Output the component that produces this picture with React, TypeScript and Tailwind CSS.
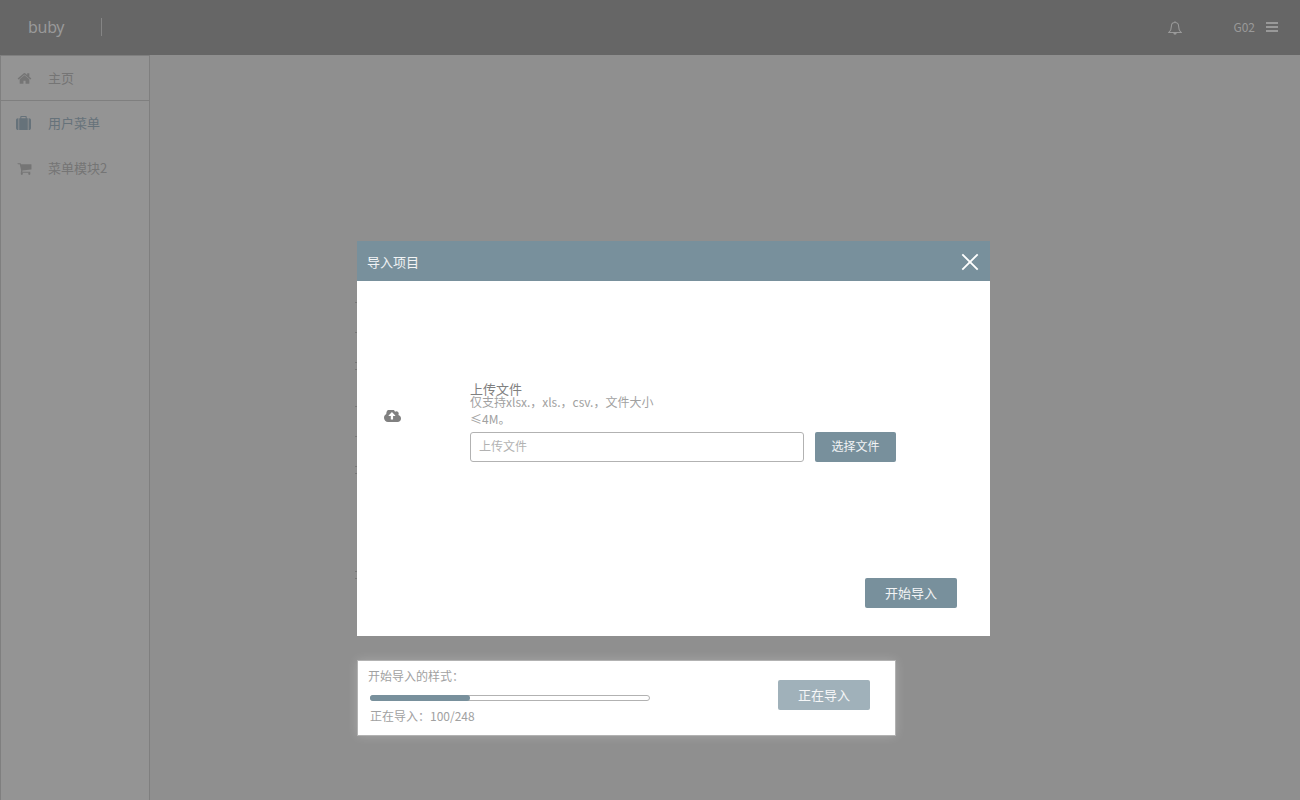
import React from "react";

type IconProps = { className?: string };

const HomeIcon = ({ className }: IconProps) => (
  <svg viewBox="0 0 1792 1792" fill="currentColor" className={className}>
    <path d="M1472 992v480q0 26-19 45t-45 19h-384v-384h-256v384h-384q-26 0-45-19t-19-45v-480q0-1 .5-3t.5-3l575-474 575 474q1 2 1 6zm223-69l-62 74q-8 9-21 11h-3q-13 0-21-7l-692-577-692 577q-12 8-24 7-13-2-21-11l-62-74q-8-10-7-23.5t11-21.5l719-599q32-26 76-26t76 26l244 204v-195q0-14 9-23t23-9h192q14 0 23 9t9 23v408l219 182q10 8 11 21.5t-7 23.5z" />
  </svg>
);

const SuitcaseIcon = ({ className }: IconProps) => (
  <svg viewBox="0 0 1792 1792" fill="currentColor" className={className}>
    <path d="M640 256h512v-128h-512v128zm-352 0v1408h-64q-92 0-158-66t-66-158v-960q0-92 66-158t158-66h64zm1120 0v1408h-1024v-1408h128v-160q0-40 28-68t68-28h576q40 0 68 28t28 68v160h128zm384 224v960q0 92-66 158t-158 66h-64v-1408h64q92 0 158 66t66 158z" />
  </svg>
);

const CartIcon = ({ className }: IconProps) => (
  <svg viewBox="0 0 1792 1792" fill="currentColor" className={className}>
    <path d="M704 1536q0 52-38 90t-90 38-90-38-38-90 38-90 90-38 90 38 38 90zm896 0q0 52-38 90t-90 38-90-38-38-90 38-90 90-38 90 38 38 90zm128-1088v512q0 24-16.5 42.5t-40.5 21.5l-1044 122q13 60 13 70 0 16-24 64h920q26 0 45 19t19 45-19 45-45 19h-1024q-26 0-45-19t-19-45q0-11 8-31.5t16-36 21.5-40 15.5-29.5l-177-823h-204q-26 0-45-19t-19-45 19-45 45-19h256q16 0 28.5 6.5t19.5 15.5 13 24.5 8 26 5.5 29.5 4.5 26h1201q26 0 45 19t19 45z" />
  </svg>
);

const CloudUploadIcon = ({ className }: IconProps) => (
  <svg viewBox="-64 256 1920 1280" preserveAspectRatio="none" fill="currentColor" className={className}>
    <path d="M1216 864q0-14-9-23l-352-352q-9-9-23-9t-23 9l-351 351q-10 12-10 24 0 14 9 23t23 9h224v352q0 13 9.5 22.5t22.5 9.5h192q13 0 22.5-9.5t9.5-22.5v-352h224q13 0 22.5-9.5t9.5-22.5zm640 288q0 159-112.5 271.5t-271.5 112.5h-1088q-185 0-316.5-131.5t-131.5-316.5q0-130 70-240t188-165q-2-30-2-43 0-212 150-362t362-150q156 0 285.5 87t188.5 231q71-62 166-62 106 0 181 75t75 181q0 76-41 138 130 31 213.5 135.5t83.5 238.5z" />
  </svg>
);

const BellIcon = ({ className }: IconProps) => (
  <svg viewBox="0 0 14 14" fill="none" stroke="currentColor" strokeWidth="1.1" className={className}>
    <path d="M7 .2v1.3M7 1.5C4.6 1.5 3.4 3.3 3.4 5.3c0 3-.6 4.6-2.5 6.2h12.2c-1.9-1.6-2.5-3.2-2.5-6.2C10.6 3.3 9.4 1.5 7 1.5z" />
    <path d="M5.3 12h3.4a1.7 1.7 0 0 1-3.4 0z" fill="currentColor" stroke="none" />
  </svg>
);

const menu = [
  { label: "主页", Icon: HomeIcon, tone: "text-[#757575]", row: "h-[45px] border-b border-[#7f7f7f]", icon: "ml-4 mt-px size-[15px]" },
  { label: "用户菜单", Icon: SuitcaseIcon, tone: "text-[#66727a]", row: "h-[44px]", icon: "ml-[15px] mr-px mt-px size-[15px]" },
  { label: "菜单模块2", Icon: CartIcon, tone: "text-[#757575]", row: "mt-px h-[44px]", icon: "ml-4 mt-px size-[15px]" },
];

// Clipped ends of the form labels that sit behind the dialog.
const labelEdges = ["mt-[61px]", "mt-[29px]", "mt-[29px]", "mt-[6px]", "mt-[36px]", "mt-[29px]", "mt-[29px]", "mt-[6px]", "mt-[97px]", "mt-[6px]"];

export default function App() {
  return (
    <div className="relative flex h-[800px] w-[1300px] flex-col overflow-hidden bg-[#8f8f8f] font-['Noto_Sans_CJK_SC',sans-serif]">
      <header className="flex h-[55px] shrink-0 items-center bg-[#666666] pb-[2px] text-[#999999]">
        <span className="ml-7 w-[73px] font-['Noto_Sans',sans-serif] text-base tracking-[-0.3px]">buby</span>
        <span className="h-[18px] w-px bg-[#858585]" />
        <BellIcon className="ml-auto mr-[-0.5px] mt-[3px] size-[14px]" />
        <span className="ml-[52px] text-xs">G02</span>
        <span className="ml-[11px] mr-[22px] flex w-3 flex-col gap-[2px]">
          <i className="h-[2px] bg-[#999999]" />
          <i className="h-[2px] bg-[#999999]" />
          <i className="h-[2px] bg-[#999999]" />
        </span>
      </header>

      <div className="flex flex-1">
        <nav className="w-[150px] border border-b-0 border-[#7f7f7f] bg-[#949494] text-[13px]">
          {menu.map(({ label, Icon, tone, row, icon }) => (
            <div key={label} className={`flex items-center ${tone} ${row}`}>
              <Icon className={icon} />
              <span className="ml-4">{label}</span>
            </div>
          ))}
        </nav>
      </div>

      <div className="absolute left-[355px] top-[241px] flex flex-col">
        <div className="flex">
          <div className="w-[2px]">
            {labelEdges.map((gap, i) => (
              <div key={i} className={`h-px bg-[#777777] ${gap}`} />
            ))}
          </div>
          <section className="flex h-[395px] w-[633px] flex-col bg-white">
            <div className="flex h-10 items-center justify-between bg-[#78909c] pl-[10px] pr-3 text-[13px] text-white/90">
              <span className="mt-[2px]">导入项目</span>
              <svg viewBox="0 0 16 16" className="mt-[2px] size-4 overflow-visible" stroke="white" strokeWidth="1.8">
                <path d="M.3.3l15.4 15.4M15.7.3L.3 15.7" />
              </svg>
            </div>
            <div className="flex pl-[27px] pt-[98px]">
              <CloudUploadIcon className="mt-[31px] h-3 w-[17px] shrink-0 text-[#808080]" />
              <div className="ml-[69px]">
                <div className="text-[13px] leading-[20px] text-[#808080]">上传文件</div>
                <div className="-mt-[6px] w-[190px] text-xs leading-[17px] text-[#a1a1a1]">
                  仅支持xlsx.，xls.，csv.，文件大小≤4M。
                </div>
                <div className="mt-[5px] flex gap-[11px]">
                  <div className="flex h-[30px] w-[334px] items-center rounded-[3px] border border-[#b2b2b2] pb-[2px] pl-2 text-xs text-[#b2b2b2]">
                    上传文件
                  </div>
                  <button className="h-[30px] w-[81px] rounded-[2px] bg-[#78909c] pb-[2px] text-xs text-white/90">选择文件</button>
                </div>
              </div>
            </div>
            <button className="mb-7 mr-[33px] mt-auto h-[30px] w-[92px] self-end rounded-[2px] bg-[#78909c] text-[13px] text-white/90">
              开始导入
            </button>
          </section>
        </div>

        <section className="ml-[2px] mt-6 flex h-[76px] w-[539px] border border-[#b2b2b2] bg-white text-xs text-[#a1a1a1] shadow-[0_0_10px_rgba(255,255,255,0.2)]">
          <div className="ml-[10px] mt-[6px]">
            <div className="leading-[18px]">开始导入的样式：</div>
            <div className="ml-[2px] mt-[10px] h-[6px] w-[280px] rounded-[3px] border border-[#b2b2b2]">
              <div className="-ml-px -mt-px h-[6px] w-[100px] rounded-[3px] bg-[#78909c]" />
            </div>
            <div className="ml-[2px] mt-[6px] leading-[18px]">正在导入：100/248</div>
          </div>
          <button className="ml-auto mr-[25px] mt-[19px] h-[30px] w-[92px] rounded-[2px] bg-[#a0b1ba] text-[13px] text-white/90">
            正在导入
          </button>
        </section>
      </div>
    </div>
  );
}
